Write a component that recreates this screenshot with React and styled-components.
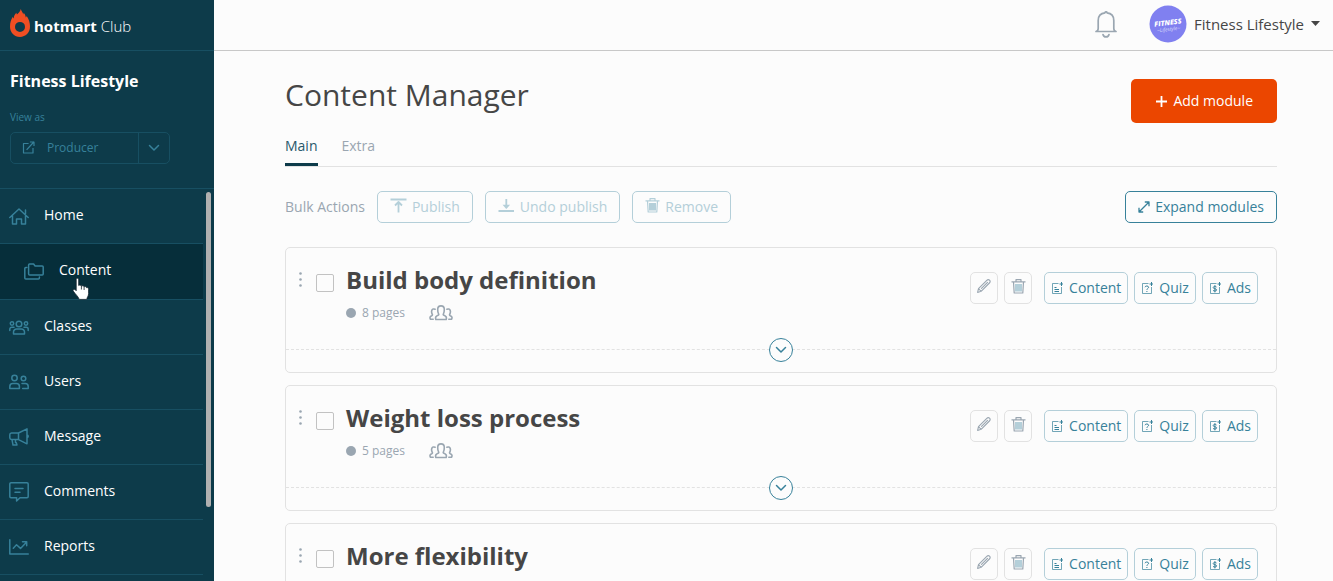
import React, { useState } from 'react'
import styled, { createGlobalStyle } from 'styled-components';


const GlobalStyle = createGlobalStyle`
  * {
    box-sizing: border-box;
  }

  body {
    margin: 0;
    background-color: #FCFCFC;
    color: #464646;
    font-family: 'Open Sans', 'Noto Sans', sans-serif;
    font-size: 14px;
    line-height: 20px;
  }

  button {
    font: inherit;
    cursor: pointer;
  }

  svg {
    display: block;
    flex: none;
  }
`;

const Page = styled.div`
  display: flex;
  height: 100vh;
  overflow: hidden;
`;

/* sidebar */

const Sidebar = styled.aside`
  display: flex;
  flex-direction: column;
  flex: none;
  width: 214px;
  background-color: #0D3B4A;
  color: #FFFFFF;
`;

const Brand = styled.a`
  display: flex;
  align-items: center;
  gap: 4px;
  height: 51px;
  padding: 0 10px 4px;
  border-bottom: 1px solid #174F62;
  color: inherit;
  font-size: 15px;
  text-decoration: none;
`;

const BrandName = styled.span`
  padding-top: 6px;
  font-weight: 300;

  b {
    font-weight: 700;
  }
`;

const Profile = styled.div`
  display: flex;
  flex-direction: column;
  padding: 20px 10px 24px;
  border-bottom: 1px solid #174F62;
`;

const ProfileName = styled.h2`
  margin: 0 0 18px;
  font-size: 16px;
  line-height: 20px;
  font-weight: 700;
`;

const ViewAs = styled.span`
  margin-bottom: 7px;
  color: #37819A;
  font-size: 10px;
  line-height: 16px;
`;

const ViewSwitch = styled.div`
  display: flex;
  width: 160px;
  height: 32px;
  border: 1px solid #174F62;
  border-radius: 5px;
`;

const ViewButton = styled.button`
  display: flex;
  flex: 1;
  align-items: center;
  gap: 12px;
  padding: 0 11px;
  border: none;
  background: none;
  color: #37819A;
  font-size: 12px;

  svg {
    margin-bottom: 2px;
  }
`;

const ViewToggle = styled.button`
  display: flex;
  align-items: center;
  justify-content: center;
  width: 31px;
  padding: 0;
  border: none;
  border-left: 1px solid #174F62;
  background: none;
  color: #37819A;
`;

const NavScroll = styled.div`
  display: flex;
  flex: 1;
  min-height: 0;
  overflow: hidden;
`;

const Nav = styled.nav`
  flex: 1;
`;

const ScrollTrack = styled.div`
  width: 11px;
  padding: 3px 3px 0;
`;

const ScrollThumb = styled.div`
  width: 5px;
  height: 81%;
  border-radius: 3px;
  background-color: #B0B0B0;
`;

const NavItem = styled.a`
  position: relative;
  display: flex;
  align-items: center;
  gap: 15px;
  height: ${props => props.$sub ? 56 : 55}px;
  padding-left: ${props => props.$sub ? 24 : 9}px;
  border-bottom: 1px solid #174F62;
  background-color: ${props => props.$active ? '#062E3A' : 'transparent'};
  color: #FFFFFF;
  text-decoration: none;

  svg {
    color: #37819A;
  }

  span {
    padding-bottom: 3px;
  }
`;

const Pointer = styled.svg`
  position: absolute;
  top: 33px;
  left: 72px;
`;

/* right side */

const Content = styled.div`
  display: flex;
  flex-direction: column;
  flex: 1;
  min-width: 0;
`;

const TopBar = styled.header`
  display: flex;
  flex: none;
  align-items: center;
  justify-content: flex-end;
  gap: 32px;
  height: 51px;
  padding: 0 13px 2px 0;
  border-bottom: 1px solid #C8C8C8;
`;

const IconButton = styled.button`
  display: flex;
  padding: 0;
  border: none;
  background: none;
  color: #9AA6B1;
`;

const Account = styled.button`
  display: flex;
  align-items: center;
  gap: 7px;
  padding: 0;
  border: none;
  background: none;
  color: #464646;
  font-size: 15px;
`;

const Main = styled.main`
  padding: 28px 56px 0 71px;
`;

const TitleRow = styled.div`
  display: flex;
  align-items: flex-start;
  justify-content: space-between;
`;

const Title = styled.h1`
  margin: 0;
  font-size: 30px;
  line-height: 32px;
  font-weight: 400;
`;

const AddButton = styled.button`
  display: flex;
  align-items: center;
  gap: 5px;
  height: 44px;
  padding: 0 24px;
  border: none;
  border-radius: 5px;
  background-color: #EB4600;
  color: #FFFFFF;
  font-weight: 500;

  &:hover {
    background-color: #D43F00;
  }
`;

const Tabs = styled.div`
  display: flex;
  gap: 24px;
  height: 44px;
  border-bottom: 1px solid #E2E2E2;
`;

const Tab = styled.button`
  height: 43px;
  padding: 6px 0 0;
  border: none;
  border-bottom: 3px solid ${props => props.$active ? '#0D3B4A' : 'transparent'};
  background: none;
  color: ${props => props.$active ? '#28586B' : '#9AA6B1'};
`;

const Toolbar = styled.div`
  display: flex;
  align-items: center;
  gap: 12px;
  padding: 24px 0;
`;

const ToolbarLabel = styled.span`
  color: #9AA6B1;
`;

const OutlineButton = styled.button`
  display: flex;
  align-items: center;
  gap: 5px;
  height: 32px;
  padding: 0 12px;
  border: 1px solid ${props => props.disabled ? '#B4CFD9' : '#37819A'};
  border-radius: 5px;
  background: none;
  color: ${props => props.disabled ? '#B4CFD9' : '#37819A'};

  &:disabled svg {
    margin-bottom: 3px;
  }
`;

const ExpandButton = styled(OutlineButton)`
  margin-left: auto;
`;

const Modules = styled.div`
  display: flex;
  flex-direction: column;
  gap: 12px;
`;

const Card = styled.section`
  border: 1px solid #E2E2E2;
  border-radius: 5px;
`;

const CardTop = styled.div`
  display: flex;
  align-items: flex-start;
  height: 102px;
  padding: 24px 18px 0 11px;
  border-bottom: 1px dashed #E2E2E2;
`;

const Check = styled.input`
  appearance: none;
  flex: none;
  width: 18px;
  height: 18px;
  margin: 2px 12px 0;
  border: 1px solid #C2C2C2;
  border-radius: 2px;

  &:checked {
    background-color: #37819A;
  }
`;

const CardText = styled.div`
  flex: 1;
`;

const CardTitle = styled.h3`
  margin: 0 0 16px;
  font-size: 24px;
  line-height: 16px;
  font-weight: 700;
`;

const CardMeta = styled.div`
  display: flex;
  align-items: center;
  color: #9AA6B1;
  font-size: 12px;
  line-height: 18px;

  svg {
    margin-left: 24px;
  }
`;

const StatusDot = styled.i`
  width: 10px;
  height: 10px;
  margin-right: 6px;
  border-radius: 50%;
  background-color: #9AA6B1;
`;

const Actions = styled.div`
  display: flex;
  gap: 6px;
`;

const ToolButton = styled.button`
  display: flex;
  align-items: center;
  justify-content: center;
  width: 28px;
  height: 32px;
  padding: 0 0 4px;
  border: 1px solid #E2E2E2;
  border-radius: 5px;
  background: none;
  color: #9AA6B1;
`;

const AddLinks = styled.div`
  display: flex;
  gap: 6px;
  margin-left: 6px;
`;

const SmallButton = styled(OutlineButton)`
  gap: 6px;
  padding: 0 6px;
  border-color: #B4CFD9;
`;

const CardBottom = styled.div`
  position: relative;
  height: 22px;
`;

const ToggleButton = styled.button`
  position: absolute;
  top: -12px;
  left: calc(50% - 12px);
  display: flex;
  align-items: center;
  justify-content: center;
  width: 24px;
  height: 24px;
  padding: 0;
  border: 1px solid #37819A;
  border-radius: 50%;
  background-color: #FCFCFC;
  color: #37819A;
`;


const Icon = ({ w, h, children, ...rest }) => (
    <svg
        width={w}
        height={h}
        viewBox={`0 0 ${w} ${h}`}
        fill="none"
        stroke="currentColor"
        strokeWidth="1.5"
        strokeLinecap="round"
        strokeLinejoin="round"
        aria-hidden="true"
        {...rest}
    >
        {children}
    </svg>
)

const FlameLogo = () => (
    <svg width="20" height="28" viewBox="0 0 20 28" aria-hidden="true">
        <path
            fill="#F04E23"
            fillRule="evenodd"
            d="M10.8 0C11.2 2 12.6 3 13.3 5.4c.3-.6.3-1.1.2-1.7 1.5 1.4 2.1 3 2.3 4.7.5-.3.8-.8.9-1.4C18.900 10 20 13.800 20 17.600 20 23.600 15.600 28 10 28S0 23.600 0 17.800C0 13.600 1 10.600 2.800 7.800c.1.7.3 1.200.8 1.600C4 6.600 5 5 6.500 3.700c0 .7.1 1.200.4 1.700C8.300 4.300 10.300 2.500 10.800 0ZM10 12.900a5 5 0 1 0 0 10 5 5 0 0 0 0-10Z"
        />
    </svg>
)

const HomeIcon = () => (
    <Icon w={20} h={17}>
        <path d="M.8 9.500 10 1l9.200 8.500M16.500 5.500V2M3.500 8v8h4v-5h5v5h4V8" />
    </Icon>
)

const FoldersIcon = () => (
    <Icon w={20} h={17}>
        <path d="M4.600 2a1 1 0 0 1 1-1h4l1.500 2h7.100a1 1 0 0 1 1 1v7a1 1 0 0 1-1 1H5.600a1 1 0 0 1-1-1ZM2.800 4.600H1.800a1 1 0 0 0-1 1V15a1 1 0 0 0 1 1h12.600a1 1 0 0 0 1-1v-1" />
    </Icon>
)

const ClassesIcon = () => (
    <Icon w={20} h={15}>
        <circle cx="10" cy="4" r="2.800" />
        <circle cx="3" cy="3.500" r="1.700" />
        <circle cx="17" cy="3.500" r="1.700" />
        <path d="M4.500 14v-2a3 3 0 0 1 3-3h5a3 3 0 0 1 3 3v2ZM.8 10.500V9.200a2 2 0 0 1 2-2H5M19.200 10.500V9.200a2 2 0 0 0-2-2H15" />
    </Icon>
)

const UsersIcon = () => (
    <Icon w={20} h={16}>
        <circle cx="5.500" cy="4" r="2.700" />
        <circle cx="14.500" cy="4.500" r="2.300" />
        <path d="M.8 14.500v-2a3 3 0 0 1 3-3h3.600a3 3 0 0 1 3 3v2ZM13 9.500h3.200a3 3 0 0 1 3 3v2h-5.500" />
    </Icon>
)

const MessageIcon = () => (
    <Icon w={20} h={18}>
        <path d="M9.500 5h-7A1.800 1.800 0 0 0 .8 6.800v3a1.800 1.800 0 0 0 1.700 1.800h7ZM9.500 5 18 .8v15l-8.500-4.200M18 7q1.200 0 1.200 1.300T18 9.600M3 11.600 4 17h4l-.8-2.500h-.7v-2.900" />
    </Icon>
)

const CommentsIcon = () => (
    <Icon w={20} h={20}>
        <path d="M2 .8h16A1.200 1.200 0 0 1 19.200 2v12.500a1.200 1.200 0 0 1-1.200 1.200h-7L7.600 19v-3.300H2A1.200 1.200 0 0 1 .8 14.500V2A1.200 1.200 0 0 1 2 .8ZM6 6.500h8M6 10.300h5" />
    </Icon>
)

const ReportsIcon = () => (
    <Icon w={20} h={16}>
        <path d="M.8.800v14.200h18.500M4.300 9.200l3.200-3.400 4 3.600 5.700-6M13.500 2.700h4.200v4" />
    </Icon>
)

const ExternalIcon = () => (
    <Icon w={13} h={13} strokeWidth="1.200" strokeLinecap="square">
        <path d="M6 2.500H1.500v9.500H11V7.500M5 8.500 11.800 1M8.500 1H12v3.500" />
    </Icon>
)

const ChevronIcon = () => (
    <Icon w={12} h={8}>
        <path d="m1.500 1.500 4.500 4.500 4.500-4.500" />
    </Icon>
)

const BellIcon = () => (
    <Icon w={22} h={27} strokeWidth="1.700">
        <path d="M1 20.500c1.600-.5 2.200-1.200 2.200-3V9.400C3.200 5 6 2.200 10 1.800a1 1 0 0 1 2 0c4 .4 6.800 3.200 6.800 7.600v8.100c0 1.800.6 2.500 2.200 3ZM8 23.500c.3 1.500 1.400 2.400 3 2.400s2.700-.9 3-2.400" />
    </Icon>
)

const Avatar = () => (
    <svg width="38" height="38" viewBox="0 0 38 38" aria-hidden="true">
        <circle cx="19" cy="19" r="18.500" fill="#8080F0" />
        <g transform="rotate(-7 19 19)" fill="#FFFFFF" textAnchor="middle" fontFamily="Open Sans" fontStyle="italic">
            <text x="19" y="20" fontSize="7" fontWeight="800">FITNESS</text>
            <text x="19" y="26" fontSize="5" opacity="0.700">~Lifestyle~</text>
        </g>
    </svg>
)

const Caret = () => (
    <Icon w={9} h={6} stroke="none" fill="currentColor">
        <path d="M0 0h9L4.500 5Z" />
    </Icon>
)

const PlusIcon = () => (
    <Icon w={13} h={13} strokeWidth="1.800" strokeLinecap="butt">
        <path d="M6.500 1v11M1 6.500h11" />
    </Icon>
)

const PublishIcon = () => (
    <Icon w={17} h={15} strokeWidth="1.800" strokeLinecap="butt">
        <path d="M.5 1.500h16M8.500 14.500V4.500M5 7.500l3.500-3.500L12 7.500" />
    </Icon>
)

const UnpublishIcon = () => (
    <Icon w={17} h={15} strokeWidth="1.800" strokeLinecap="butt">
        <path d="M.5 13h15.500M8.300 1v8" />
        <path d="M4.500 6.800h7.600L8.300 11Z" fill="currentColor" stroke="none" />
    </Icon>
)

const TrashIcon = ({ fill }) => (
    <Icon w={15} h={15} strokeWidth="1.200" strokeLinecap="butt">
        <path d="M4 5h7v7.500H4Z" fill={fill} stroke="none" />
        <path d="M.5 2.800h14M5 2.500V.7h5v1.800M2.500 3l.7 11h8.600l.7-11" />
    </Icon>
)

const ExpandIcon = () => (
    <Icon w={12} h={12} strokeWidth="1.300" strokeLinecap="butt">
        <path d="m1 11 10-10M6.800 1H11v4.200M1 6.800V11h4.200" />
    </Icon>
)

const DragIcon = () => (
    <Icon w={7} h={16} stroke="none" fill="#9AA6B1">
        <circle cx="3.500" cy="1.500" r="1.300" />
        <circle cx="3.500" cy="7.500" r="1.300" />
        <circle cx="3.500" cy="13.500" r="1.300" />
    </Icon>
)

const GroupIcon = () => (
    <Icon w={24} h={16} strokeWidth="1.600">
        <path d="M6.800 14.500c-.8-2.300.2-3.500 2.300-4.300.8-.3.8-.9.400-1.500C8.700 7.300 8.700 6 8.700 4.500 8.700 2.200 10 .9 12 .9s3.300 1.300 3.300 3.600c0 1.500 0 2.800-.8 4.200-.4.600-.4 1.200.4 1.500 2.100.8 3.100 2 2.300 4.300Z" />
        <path d="M4.200 14.300H1.500c-1-1.800-.4-3 1.200-3.600.6-.3.900-.7.600-1.300-.8-1.500-.9-2.800-.5-4 .5-1.300 1.900-1.800 3.300-1.200M19.800 14.300h2.700c1-1.800.4-3-1.200-3.600-.6-.3-.9-.7-.6-1.300.8-1.500.9-2.800.5-4-.5-1.300-1.900-1.800-3.300-1.200" />
    </Icon>
)

const PencilIcon = () => (
    <Icon w={14} h={14} strokeWidth="1.100">
        <path d="M.6 13.400 1.500 9.600l8.300-8.300c1-1 1.900-.9 2.700-.1s.9 1.800-.1 2.800l-8.300 8.300ZM1.600 9.800l2.500 2.400M4.500 9.300l6-6" />
    </Icon>
)

const docGlyphs = {
    content: 'M3.500 5.500h2M3.500 7.500h4.500M3.500 9.500h4.500',
    quiz: 'M4 5.200c.1-1.600 3.600-1.700 3.600.1 0 1.200-1.700 1.100-1.700 2.500M5.900 9v1',
    ads: 'M7.500 5C6.800 4 4.200 4.200 4.200 5.600c0 1.600 3.400.7 3.400 2.300 0 1.500-2.800 1.500-3.600.4M5.900 3.200v7.200',
}

const DocIcon = ({ kind }) => (
    <Icon w={12} h={13} strokeWidth="1" strokeLinecap="butt" strokeLinejoin="miter">
        <path d="M7.500 1.500h-6v10h9V5" opacity="0.700" />
        <path d="M10.500 0v4M8.500 2h4" />
        <path d={docGlyphs[kind]} />
    </Icon>
)

const HandPointer = () => (
    <Pointer width="18" height="24" viewBox="0 0 18 24" aria-hidden="true">
        <path
            d="M5.200 1.200c1 0 1.500.7 1.500 1.600v5.700c.2-.6 2.500-.6 2.700.6.500-.7 2.500-.4 2.700.7.700-.6 2.400-.2 2.600.9.800-.4 1.900.2 1.900 1.600v4.200c0 2.600-1.500 3.400-1.800 5.900H7.200C6.600 19.700 3.200 17.200 1.200 14c-.7-1.200.7-2.300 2-1.300l1 1V2.800c0-.9.3-1.600 1-1.600Z"
            fill="#FFFFFF"
            stroke="#10202A"
            strokeWidth="0.800"
        />
        <path d="M9.400 9v3.500M12.100 10v3" stroke="#10202A" strokeWidth="0.800" fill="none" />
    </Pointer>
)


const navItems = [
    { label: 'Home', icon: HomeIcon },
    { label: 'Content', icon: FoldersIcon, sub: true, active: true },
    { label: 'Classes', icon: ClassesIcon },
    { label: 'Users', icon: UsersIcon },
    { label: 'Message', icon: MessageIcon },
    { label: 'Comments', icon: CommentsIcon },
    { label: 'Reports', icon: ReportsIcon },
]

const modules = [
    { id: 1, title: 'Build body definition', pages: 8 },
    { id: 2, title: 'Weight loss process', pages: 5 },
    { id: 3, title: 'More flexibility' },
]

function ModuleCard({ title, pages }) {
    return (
        <Card>
            <CardTop>
                <DragIcon />
                <Check type="checkbox" aria-label={title} />
                <CardText>
                    <CardTitle>{title}</CardTitle>
                    {pages && (
                        <CardMeta>
                            <StatusDot />
                            {pages} pages
                            <GroupIcon />
                        </CardMeta>
                    )}
                </CardText>
                <Actions>
                    <ToolButton aria-label="Edit"><PencilIcon /></ToolButton>
                    <ToolButton aria-label="Remove"><TrashIcon fill="#B4CFD9" /></ToolButton>
                    <AddLinks>
                        <SmallButton><DocIcon kind="content" />Content</SmallButton>
                        <SmallButton><DocIcon kind="quiz" />Quiz</SmallButton>
                        <SmallButton><DocIcon kind="ads" />Ads</SmallButton>
                    </AddLinks>
                </Actions>
            </CardTop>
            <CardBottom>
                <ToggleButton aria-label="Expand"><ChevronIcon /></ToggleButton>
            </CardBottom>
        </Card>
    )
}

function App() {
    const [tab, setTab] = useState('Main');

    return (
        <>
            <GlobalStyle />
            <Page>
                <Sidebar>
                    <Brand href="#">
                        <FlameLogo />
                        <BrandName><b>hotmart</b> Club</BrandName>
                    </Brand>
                    <Profile>
                        <ProfileName>Fitness Lifestyle</ProfileName>
                        <ViewAs>View as</ViewAs>
                        <ViewSwitch>
                            <ViewButton><ExternalIcon />Producer</ViewButton>
                            <ViewToggle aria-label="Change view"><ChevronIcon /></ViewToggle>
                        </ViewSwitch>
                    </Profile>
                    <NavScroll>
                        <Nav>
                            {navItems.map(({ label, icon: NavIcon, sub, active }) => (
                                <NavItem key={label} href="#" $sub={sub} $active={active}>
                                    <NavIcon />
                                    <span>{label}</span>
                                    {active && <HandPointer />}
                                </NavItem>
                            ))}
                        </Nav>
                        <ScrollTrack><ScrollThumb /></ScrollTrack>
                    </NavScroll>
                </Sidebar>
                <Content>
                    <TopBar>
                        <IconButton aria-label="Notifications"><BellIcon /></IconButton>
                        <Account>
                            <Avatar />
                            Fitness Lifestyle
                            <Caret />
                        </Account>
                    </TopBar>
                    <Main>
                        <TitleRow>
                            <Title>Content Manager</Title>
                            <AddButton><PlusIcon />Add module</AddButton>
                        </TitleRow>
                        <Tabs>
                            {['Main', 'Extra'].map((name) => (
                                <Tab key={name} $active={tab === name} onClick={() => setTab(name)}>{name}</Tab>
                            ))}
                        </Tabs>
                        <Toolbar>
                            <ToolbarLabel>Bulk Actions</ToolbarLabel>
                            <OutlineButton disabled><PublishIcon />Publish</OutlineButton>
                            <OutlineButton disabled><UnpublishIcon />Undo publish</OutlineButton>
                            <OutlineButton disabled><TrashIcon fill="#B4CFD9" />Remove</OutlineButton>
                            <ExpandButton><ExpandIcon />Expand modules</ExpandButton>
                        </Toolbar>
                        <Modules>
                            {modules.map((item) => (
                                <ModuleCard key={item.id} title={item.title} pages={item.pages} />
                            ))}
                        </Modules>
                    </Main>
                </Content>
            </Page>
        </>
    )
}

export default App
